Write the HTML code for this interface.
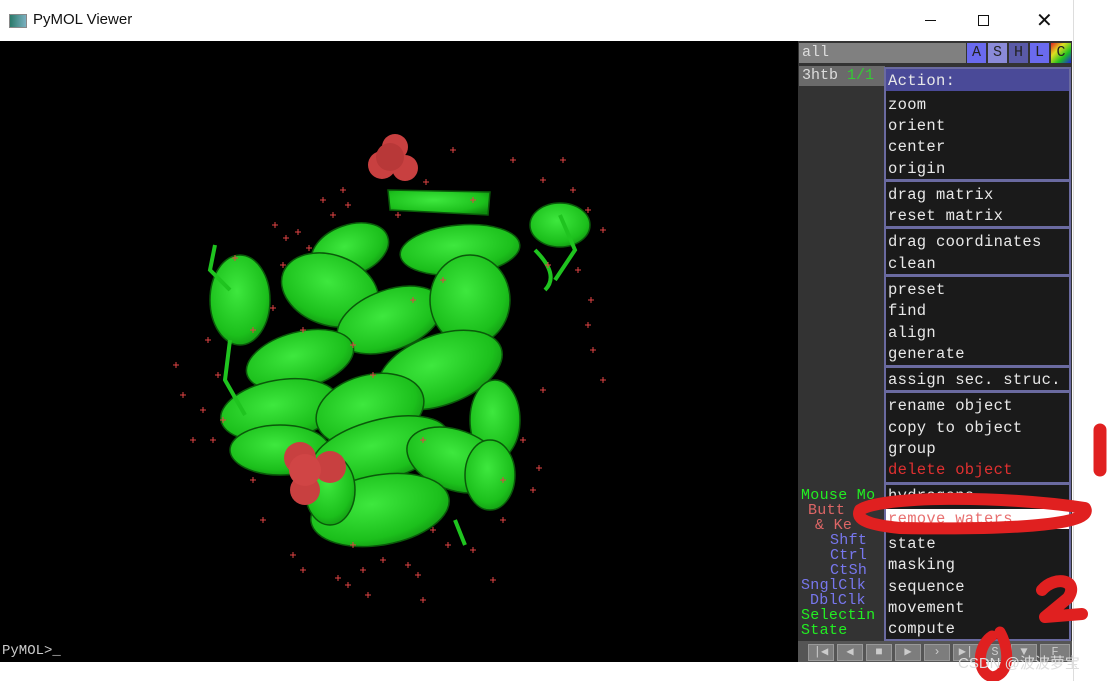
<!DOCTYPE html>
<html><head><meta charset="utf-8"><style>
*{margin:0;padding:0;box-sizing:border-box}
body{width:1108px;height:681px;background:#fff;position:relative;overflow:hidden;font-family:"Liberation Mono",monospace}
.a{position:absolute}
.t{position:absolute;font-size:15.5px;color:#e8e8e8;white-space:pre;line-height:18px;letter-spacing:0.3px}
.sep{position:absolute;left:884px;width:187px;height:3px;background:#6a6aa0}
.btn{position:absolute;top:644px;width:26px;height:17px;background:#7d7d7d;border:1px solid #999;color:#ccc;font-size:12px;text-align:center;line-height:15px}
</style></head><body>
<div class="a" style="left:9px;top:14px;width:18px;height:14px;background:linear-gradient(90deg,#2a7a6a,#7ab0c0);border:1px solid #888"></div>
<div class="a" style="left:33px;top:11px;font-family:'Liberation Sans',sans-serif;font-size:15px;color:#111">PyMOL Viewer</div>
<div class="a" style="left:925px;top:20px;width:11px;height:1px;background:#111"></div>
<div class="a" style="left:978px;top:15px;width:11px;height:11px;border:1px solid #111"></div>
<div class="a" style="left:1036px;top:8px;font-family:'Liberation Sans',sans-serif;font-size:20px;color:#111">✕</div>
<div class="a" style="left:1073px;top:0;width:1px;height:681px;background:#ddd"></div>

<div class="a" style="left:0;top:41px;width:798px;height:600px;background:#000"></div>
<svg class="a" style="left:0;top:41px" width="798" height="600" viewBox="0 41 798 600">
<defs><radialGradient id="g" cx="0.45" cy="0.4" r="0.7"><stop offset="0" stop-color="#3ee83e"/><stop offset="0.7" stop-color="#1cc01c"/><stop offset="1" stop-color="#0e8a0e"/></radialGradient></defs>
<g fill="url(#g)" stroke="#0a5a0a" stroke-width="1.5">
<path d="M388 190 L490 192 L488 215 L390 210Z"/>
<ellipse cx="350" cy="250" rx="40" ry="25" transform="rotate(-20 350 250)"/>
<ellipse cx="460" cy="250" rx="60" ry="25" transform="rotate(-5 460 250)"/>
<ellipse cx="560" cy="225" rx="30" ry="22"/>
<ellipse cx="240" cy="300" rx="30" ry="45"/>
<ellipse cx="330" cy="290" rx="50" ry="35" transform="rotate(20 330 290)"/>
<ellipse cx="390" cy="320" rx="55" ry="30" transform="rotate(-20 390 320)"/>
<ellipse cx="470" cy="300" rx="40" ry="45"/>
<ellipse cx="300" cy="360" rx="55" ry="28" transform="rotate(-15 300 360)"/>
<ellipse cx="440" cy="370" rx="65" ry="35" transform="rotate(-20 440 370)"/>
<ellipse cx="280" cy="410" rx="60" ry="30" transform="rotate(-10 280 410)"/>
<ellipse cx="370" cy="410" rx="55" ry="35" transform="rotate(-15 370 410)"/>
<ellipse cx="495" cy="420" rx="25" ry="40"/>
<ellipse cx="280" cy="450" rx="50" ry="25"/>
<ellipse cx="380" cy="450" rx="70" ry="30" transform="rotate(-15 380 450)"/>
<ellipse cx="455" cy="460" rx="50" ry="30" transform="rotate(20 455 460)"/>
<ellipse cx="490" cy="475" rx="25" ry="35"/>
<ellipse cx="380" cy="510" rx="70" ry="35" transform="rotate(-10 380 510)"/>
<ellipse cx="330" cy="490" rx="25" ry="35"/>
</g>
<g fill="none" stroke="#1fc41f" stroke-width="4">
<path d="M215 245 L210 270 L230 290"/>
<path d="M560 215 L575 250 L555 280"/>
<path d="M230 340 L225 380 L245 415"/>
<path d="M455 520 L465 545"/>
<path d="M535 250 Q 560 275 545 290"/>
</g>
<g fill="#c84040"><circle cx="395" cy="147" r="13"/><circle cx="382" cy="165" r="14"/><circle cx="405" cy="168" r="13"/><circle cx="390" cy="157" r="14" fill="#b83838"/>
<circle cx="300" cy="458" r="16"/><circle cx="330" cy="467" r="16"/><circle cx="305" cy="490" r="15"/><circle cx="305" cy="470" r="16" fill="#d04545"/></g>
<g stroke="#e04444" stroke-width="1">
<path d="M173 365h6M176 362v6 M200 410h6M203 407v6 M190 440h6M193 437v6 M232 258h6M235 255v6 M283 238h6M286 235v6 M330 215h6M333 212v6 M540 180h6M543 177v6 M600 230h6M603 227v6 M588 300h6M591 297v6 M590 350h6M593 347v6 M536 468h6M539 465v6 M490 580h6M493 577v6 M420 600h6M423 597v6 M365 595h6M368 592v6 M300 570h6M303 567v6 M335 578h6M338 575v6 M220 420h6M223 417v6 M250 330h6M253 327v6 M450 150h6M453 147v6 M510 160h6M513 157v6 M560 160h6M563 157v6 M350 545h6M353 542v6 M405 565h6M408 562v6 M430 530h6M433 527v6 M520 440h6M523 437v6 M540 390h6M543 387v6 M320 200h6M323 197v6 M280 265h6M283 262v6 M470 200h6M473 197v6 M260 520h6M263 517v6 M250 480h6M253 477v6
M272 225h6M275 222v6 M295 232h6M298 229v6 M306 248h6M309 245v6 M340 190h6M343 187v6 M345 205h6M348 202v6 M395 215h6M398 212v6 M423 182h6M426 179v6 M570 190h6M573 187v6 M585 210h6M588 207v6 M575 270h6M578 267v6 M585 325h6M588 322v6 M545 265h6M548 262v6 M600 380h6M603 377v6 M530 490h6M533 487v6 M500 520h6M503 517v6 M470 550h6M473 547v6 M445 545h6M448 542v6 M380 560h6M383 557v6 M345 585h6M348 582v6 M415 575h6M418 572v6 M360 570h6M363 567v6 M290 555h6M293 552v6 M210 440h6M213 437v6 M180 395h6M183 392v6 M205 340h6M208 337v6 M215 375h6M218 372v6 M270 308h6M273 305v6 M300 330h6M303 327v6 M440 280h6M443 277v6 M370 375h6M373 372v6 M410 300h6M413 297v6 M350 345h6M353 342v6 M420 440h6M423 437v6 M500 480h6M503 477v6"/>
</g>
</svg>
<div class="a" style="left:0;top:641px;width:798px;height:21px;background:#000;color:#ccc;font-size:14px;line-height:21px;padding-left:2px">PyMOL&gt;_</div>

<div class="a" style="left:798px;top:41px;width:274px;height:621px;background:#333"></div>
<div class="a" style="left:799px;top:43px;width:167px;height:20px;background:#808080;color:#ddd;font-size:15px;line-height:20px;padding-left:3px">all</div>
<div class="a" style="left:967px;top:43px;width:19px;height:20px;background:#6a6aee;color:#222;font-size:15px;text-align:center;line-height:20px">A</div>
<div class="a" style="left:988px;top:43px;width:19px;height:20px;background:#8a8ad8;color:#222;font-size:15px;text-align:center;line-height:20px">S</div>
<div class="a" style="left:1009px;top:43px;width:19px;height:20px;background:#5a5aa8;color:#222;font-size:15px;text-align:center;line-height:20px">H</div>
<div class="a" style="left:1030px;top:43px;width:19px;height:20px;background:#6a6aee;color:#222;font-size:15px;text-align:center;line-height:20px">L</div>
<div class="a" style="left:1051px;top:43px;width:20px;height:20px;background:linear-gradient(135deg,#e02020,#e0e020,#20c020,#2020e0);color:#222;font-size:15px;text-align:center;line-height:20px">C</div>
<div class="a" style="left:799px;top:66px;width:86px;height:20px;background:#6a6a6a;color:#ddd;font-size:15px;line-height:20px;padding-left:3px">3htb <span style="color:#3c3">1/1</span></div>

<div class="t" style="left:801px;top:487px;color:#2e2;font-size:15px">Mouse Mo</div>
<div class="t" style="left:808px;top:502px;color:#d66;font-size:15px">Butt</div>
<div class="t" style="left:815px;top:517px;color:#d66;font-size:15px">&amp; Ke</div>
<div class="t" style="left:830px;top:532px;color:#77e;font-size:15px">Shft</div>
<div class="t" style="left:830px;top:547px;color:#77e;font-size:15px">Ctrl</div>
<div class="t" style="left:830px;top:562px;color:#77e;font-size:15px">CtSh</div>
<div class="t" style="left:801px;top:577px;color:#77e;font-size:15px">SnglClk</div>
<div class="t" style="left:810px;top:592px;color:#77e;font-size:15px">DblClk</div>
<div class="t" style="left:801px;top:607px;color:#2e2;font-size:15px">Selectin</div>
<div class="t" style="left:801px;top:622px;color:#2e2;font-size:15px">State</div>

<div class="a" style="left:884px;top:67px;width:187px;height:574px;background:#1a1a1a;border:2px solid #6a6aa0"></div>
<div class="a" style="left:886px;top:69px;width:183px;height:22px;background:#4a4a98"></div>
<div class="t" style="left:888px;top:72px">Action:</div>
<div class="sep" style="top:179px"></div>
<div class="sep" style="top:226px"></div>
<div class="sep" style="top:274px"></div>
<div class="sep" style="top:365px"></div>
<div class="sep" style="top:390px"></div>
<div class="sep" style="top:482px"></div>
<div class="t" style="left:888px;top:96px">zoom</div>
<div class="t" style="left:888px;top:117px">orient</div>
<div class="t" style="left:888px;top:138px">center</div>
<div class="t" style="left:888px;top:160px">origin</div>
<div class="t" style="left:888px;top:186px">drag matrix</div>
<div class="t" style="left:888px;top:207px">reset matrix</div>
<div class="t" style="left:888px;top:233px">drag coordinates</div>
<div class="t" style="left:888px;top:255px">clean</div>
<div class="t" style="left:888px;top:281px">preset</div>
<div class="t" style="left:888px;top:302px">find</div>
<div class="t" style="left:888px;top:324px">align</div>
<div class="t" style="left:888px;top:345px">generate</div>
<div class="t" style="left:888px;top:371px">assign sec. struc.</div>
<div class="t" style="left:888px;top:397px">rename object</div>
<div class="t" style="left:888px;top:419px">copy to object</div>
<div class="t" style="left:888px;top:440px">group</div>
<div class="t" style="left:888px;top:461px;color:#e03030">delete object</div>
<div class="t" style="left:888px;top:487px">hydrogens</div>
<div class="a" style="left:886px;top:509px;width:183px;height:20px;background:#fff"></div>
<div class="t" style="left:888px;top:510px;color:#e87070">remove waters</div>
<div class="t" style="left:888px;top:535px">state</div>
<div class="t" style="left:888px;top:556px">masking</div>
<div class="t" style="left:888px;top:578px">sequence</div>
<div class="t" style="left:888px;top:599px">movement</div>
<div class="t" style="left:888px;top:620px">compute</div>

<div class="a" style="left:798px;top:641px;width:274px;height:21px;background:#555"></div>
<div class="btn" style="left:808px">|◀</div><div class="btn" style="left:837px">◀</div><div class="btn" style="left:866px">■</div><div class="btn" style="left:895px">▶</div><div class="btn" style="left:924px">›</div><div class="btn" style="left:953px">▶|</div><div class="btn" style="left:982px">S</div><div class="btn" style="left:1011px">▼</div><div class="btn" style="left:1040px;width:30px">F</div>

<svg class="a" style="left:0;top:0" width="1108" height="681">
<g fill="none" stroke="#e02020" stroke-linecap="round" stroke-linejoin="round">
<path d="M1100 430 L1100 470" stroke-width="13"/>
<path d="M860 510 C 880 496 1000 495 1085 508 C 1095 525 1010 530 900 528 C 870 525 855 520 860 510" stroke-width="12"/>
<path d="M1042 590 C 1055 575 1080 580 1068 598 L 1045 617 L 1082 614" stroke-width="12"/>
<path d="M992 636 C 978 645 975 672 992 677 C 1010 675 1010 650 1000 632" stroke-width="11"/>
</g></svg>
<div class="a" style="left:958px;top:652px;font-family:'Liberation Sans','Noto Sans CJK SC',sans-serif;font-size:15px;color:#ddd">CSDN @波波萝宝</div>
</body></html>
